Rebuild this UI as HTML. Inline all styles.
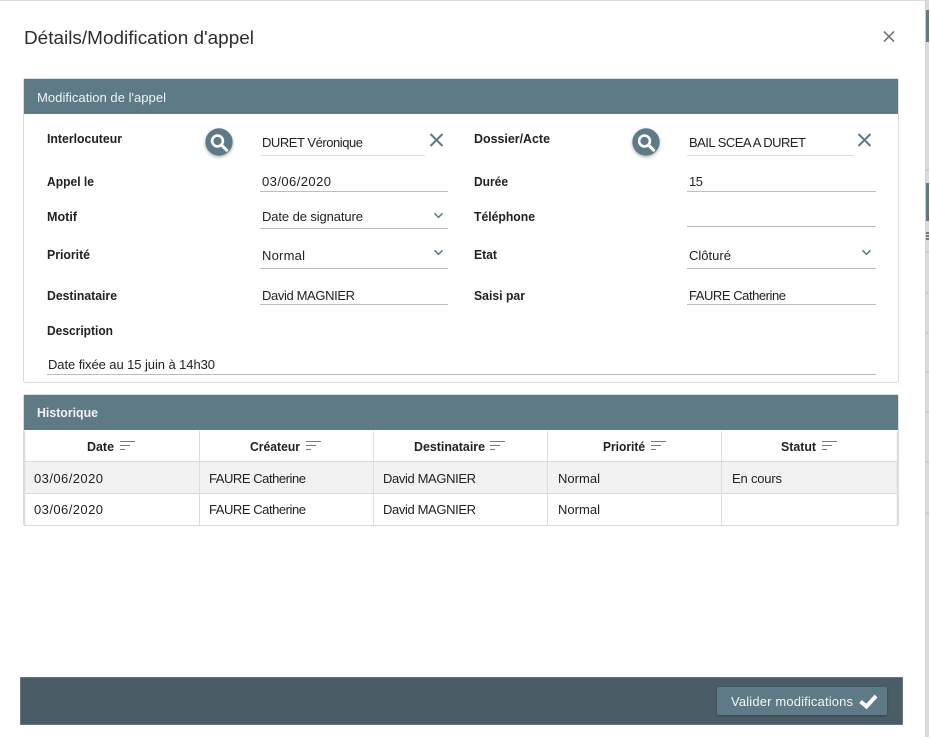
<!DOCTYPE html>
<html lang="fr">
<head>
<meta charset="utf-8">
<title>Détails/Modification d'appel</title>
<style>
html,body{margin:0;padding:0;background:#fff;width:930px;height:741px;overflow:hidden}
svg{display:block}
text{font-family:"Liberation Sans",Arial,sans-serif;font-size:13px;fill:#222}
.b{font-weight:700;font-size:12.5px;fill:#222}
.w{fill:#eef2f4}
</style>
</head>
<body>
<svg width="930" height="741" viewBox="0 0 930 741" xmlns="http://www.w3.org/2000/svg">
<defs>
<filter id="sh" x="-30%" y="-30%" width="160%" height="170%"><feDropShadow dx="0" dy="1.5" stdDeviation="1.5" flood-color="#000" flood-opacity=".3"/></filter>
<filter id="bs" x="-5%" y="-20%" width="110%" height="150%"><feDropShadow dx="0" dy="1" stdDeviation="1.2" flood-color="#000" flood-opacity=".3"/></filter>
<g id="mag"><circle cx="-1" cy="-1" r="5.400" fill="none" stroke="#fff" stroke-width="2.600"/><path d="M3.200 3.200l5 5" stroke="#fff" stroke-width="3" stroke-linecap="round"/></g>
<path id="clr" d="M-6-6L6 6M6-6L-6 6" stroke="#5f7a87" stroke-width="2" fill="none"/>
<path id="chev" d="M-4-2.200L0 1.800L4-2.200" stroke="#5f7a87" stroke-width="1.500" fill="none"/>
<path id="sort" d="M0 .5H15M0 4.500H10M0 8.500H5" stroke="#777" stroke-width="1" fill="none"/>
</defs>

<rect width="930" height="741" fill="#fff"/>
<!-- background strip -->
<rect x="925" y="0" width="4" height="737" fill="#dcdcdc"/>
<rect x="925" y="0" width="1" height="737" fill="#cfcfcf"/>
<rect x="926" y="10" width="3" height="32" fill="#5f7a87"/>
<rect x="926" y="183" width="3" height="38" fill="#5f7a87"/>
<rect x="926" y="232" width="3" height="2" fill="#777"/>
<rect x="926" y="235" width="3" height="2" fill="#777"/>
<rect x="926" y="238" width="3" height="2" fill="#777"/>
<path d="M926 170h3M926 252h3M926 293h3M926 333h3M926 372h3M926 412h3M926 462h3M926 513h3" stroke="#bbb"/>
<rect x="0" y="0" width="925" height="1" fill="#dcdcdc"/>

<!-- title -->
<text x="24" y="44" style="font-size:18px;fill:#2e2e2e" textLength="230" lengthAdjust="spacingAndGlyphs">Détails/Modification d'appel</text>
<path d="M884 31.500L894 41.500M894 31.500L884 41.500" stroke="#777" stroke-width="1.600" fill="none"/>

<!-- panel 1 -->
<rect x="23.500" y="78.500" width="875" height="304" rx="2" fill="#fff" stroke="#dcdcdc"/>
<rect x="24" y="79" width="874" height="35" fill="#5f7a87"/>
<text class="w" x="37" y="102" textLength="129" lengthAdjust="spacingAndGlyphs">Modification de l'appel</text>

<!-- labels -->
<text class="b" x="47" y="143" textLength="75" lengthAdjust="spacingAndGlyphs">Interlocuteur</text>
<text class="b" x="47" y="186" textLength="47" lengthAdjust="spacingAndGlyphs">Appel le</text>
<text class="b" x="47" y="221" textLength="30" lengthAdjust="spacingAndGlyphs">Motif</text>
<text class="b" x="47" y="259" textLength="43" lengthAdjust="spacingAndGlyphs">Priorité</text>
<text class="b" x="47" y="300" textLength="70" lengthAdjust="spacingAndGlyphs">Destinataire</text>
<text class="b" x="47" y="335" textLength="66" lengthAdjust="spacingAndGlyphs">Description</text>
<text class="b" x="474" y="143" textLength="76" lengthAdjust="spacingAndGlyphs">Dossier/Acte</text>
<text class="b" x="474" y="186" textLength="34" lengthAdjust="spacingAndGlyphs">Durée</text>
<text class="b" x="474" y="221" textLength="61" lengthAdjust="spacingAndGlyphs">Téléphone</text>
<text class="b" x="474" y="259" textLength="23" lengthAdjust="spacingAndGlyphs">Etat</text>
<text class="b" x="474" y="300" textLength="51" lengthAdjust="spacingAndGlyphs">Saisi par</text>

<!-- values -->
<text x="262" y="147" textLength="101" lengthAdjust="spacing">DURET Véronique</text>
<text x="262" y="186" textLength="69" lengthAdjust="spacing">03/06/2020</text>
<text x="262" y="221" textLength="101" lengthAdjust="spacing">Date de signature</text>
<text x="262" y="260" textLength="43" lengthAdjust="spacing">Normal</text>
<text x="262" y="300" textLength="93" lengthAdjust="spacing">David MAGNIER</text>
<text x="48" y="369" textLength="167" lengthAdjust="spacing">Date fixée au 15 juin à 14h30</text>
<text x="689" y="147" textLength="117" lengthAdjust="spacing">BAIL SCEA A DURET</text>
<text x="689" y="186" textLength="14" lengthAdjust="spacing">15</text>
<text x="689" y="260" textLength="42" lengthAdjust="spacing">Clôturé</text>
<text x="689" y="300" textLength="97" lengthAdjust="spacing">FAURE Catherine</text>

<!-- underlines -->
<path d="M260 155.500H425M687 155.500H853" stroke="#dedede"/>
<path d="M260 191.500H448M260 228.500H448M260 268.500H448M260 304.500H448M687 191.500H876M687 226.500H876M687 268.500H876M687 304.500H876M47 374.500H876" stroke="#bdbdbd"/>

<!-- search buttons -->
<g filter="url(#sh)"><circle cx="219" cy="142" r="13.700" fill="#5f7a87"/></g>
<use href="#mag" x="218.500" y="142"/>
<g filter="url(#sh)"><circle cx="646" cy="142" r="13.700" fill="#5f7a87"/></g>
<use href="#mag" x="645.500" y="142"/>
<use href="#clr" x="436.500" y="140"/>
<use href="#clr" x="864.500" y="140"/>
<use href="#chev" x="438.500" y="215.500"/>
<use href="#chev" x="438.500" y="252.500"/>
<use href="#chev" x="866.500" y="252.500"/>

<!-- panel 2 -->
<rect x="23.500" y="394.500" width="875" height="131" rx="2" fill="#fff" stroke="#dcdcdc"/>
<rect x="24" y="395" width="874" height="35" fill="#5f7a87"/>
<text class="w" x="37" y="417" style="font-weight:700;font-size:13px" textLength="61" lengthAdjust="spacingAndGlyphs">Historique</text>
<rect x="25" y="462" width="872" height="31" fill="#f2f2f2"/>
<path d="M199.500 431V525M373.500 431V525M547.500 431V525M721.500 431V525" stroke="#dcdcdc" stroke-width="1"/>
<path d="M24.500 431V526M897.500 431V526" stroke="#dcdcdc" stroke-width="1.500"/>
<path d="M24 461.500H898M24 493.500H898M24 525.500H898" stroke="#dcdcdc"/>

<text class="b" x="87" y="451" textLength="27" lengthAdjust="spacingAndGlyphs">Date</text>
<use href="#sort" x="120" y="441"/>
<text class="b" x="250" y="451" textLength="50" lengthAdjust="spacingAndGlyphs">Créateur</text>
<use href="#sort" x="306" y="441"/>
<text class="b" x="414" y="451" textLength="71" lengthAdjust="spacingAndGlyphs">Destinataire</text>
<use href="#sort" x="490" y="441"/>
<text class="b" x="603" y="451" textLength="42" lengthAdjust="spacingAndGlyphs">Priorité</text>
<use href="#sort" x="651" y="441"/>
<text class="b" x="781" y="451" textLength="35" lengthAdjust="spacingAndGlyphs">Statut</text>
<use href="#sort" x="822" y="441"/>

<text x="34" y="483" textLength="69" lengthAdjust="spacing">03/06/2020</text>
<text x="209" y="483" textLength="97" lengthAdjust="spacing">FAURE Catherine</text>
<text x="383" y="483" textLength="93" lengthAdjust="spacing">David MAGNIER</text>
<text x="558" y="483" textLength="42" lengthAdjust="spacing">Normal</text>
<text x="732" y="483" textLength="50" lengthAdjust="spacing">En cours</text>
<text x="34" y="514" textLength="69" lengthAdjust="spacing">03/06/2020</text>
<text x="209" y="514" textLength="97" lengthAdjust="spacing">FAURE Catherine</text>
<text x="383" y="514" textLength="93" lengthAdjust="spacing">David MAGNIER</text>
<text x="558" y="514" textLength="42" lengthAdjust="spacing">Normal</text>

<!-- footer -->
<rect x="20" y="677" width="883" height="48" fill="#5f7a87" opacity=".8"/>
<rect x="20.500" y="677.500" width="882" height="47" fill="#4a5c66"/>
<g filter="url(#bs)"><rect x="717" y="687" width="170" height="28" rx="2" fill="#5f7a87"/></g>
<text x="731" y="706" style="fill:#f2f5f6" textLength="122" lengthAdjust="spacing">Valider modifications</text>
<path d="M860.500 701.500L866.500 706.500L876 696" stroke="#fff" stroke-width="4" fill="none"/>
</svg>
</body>
</html>
